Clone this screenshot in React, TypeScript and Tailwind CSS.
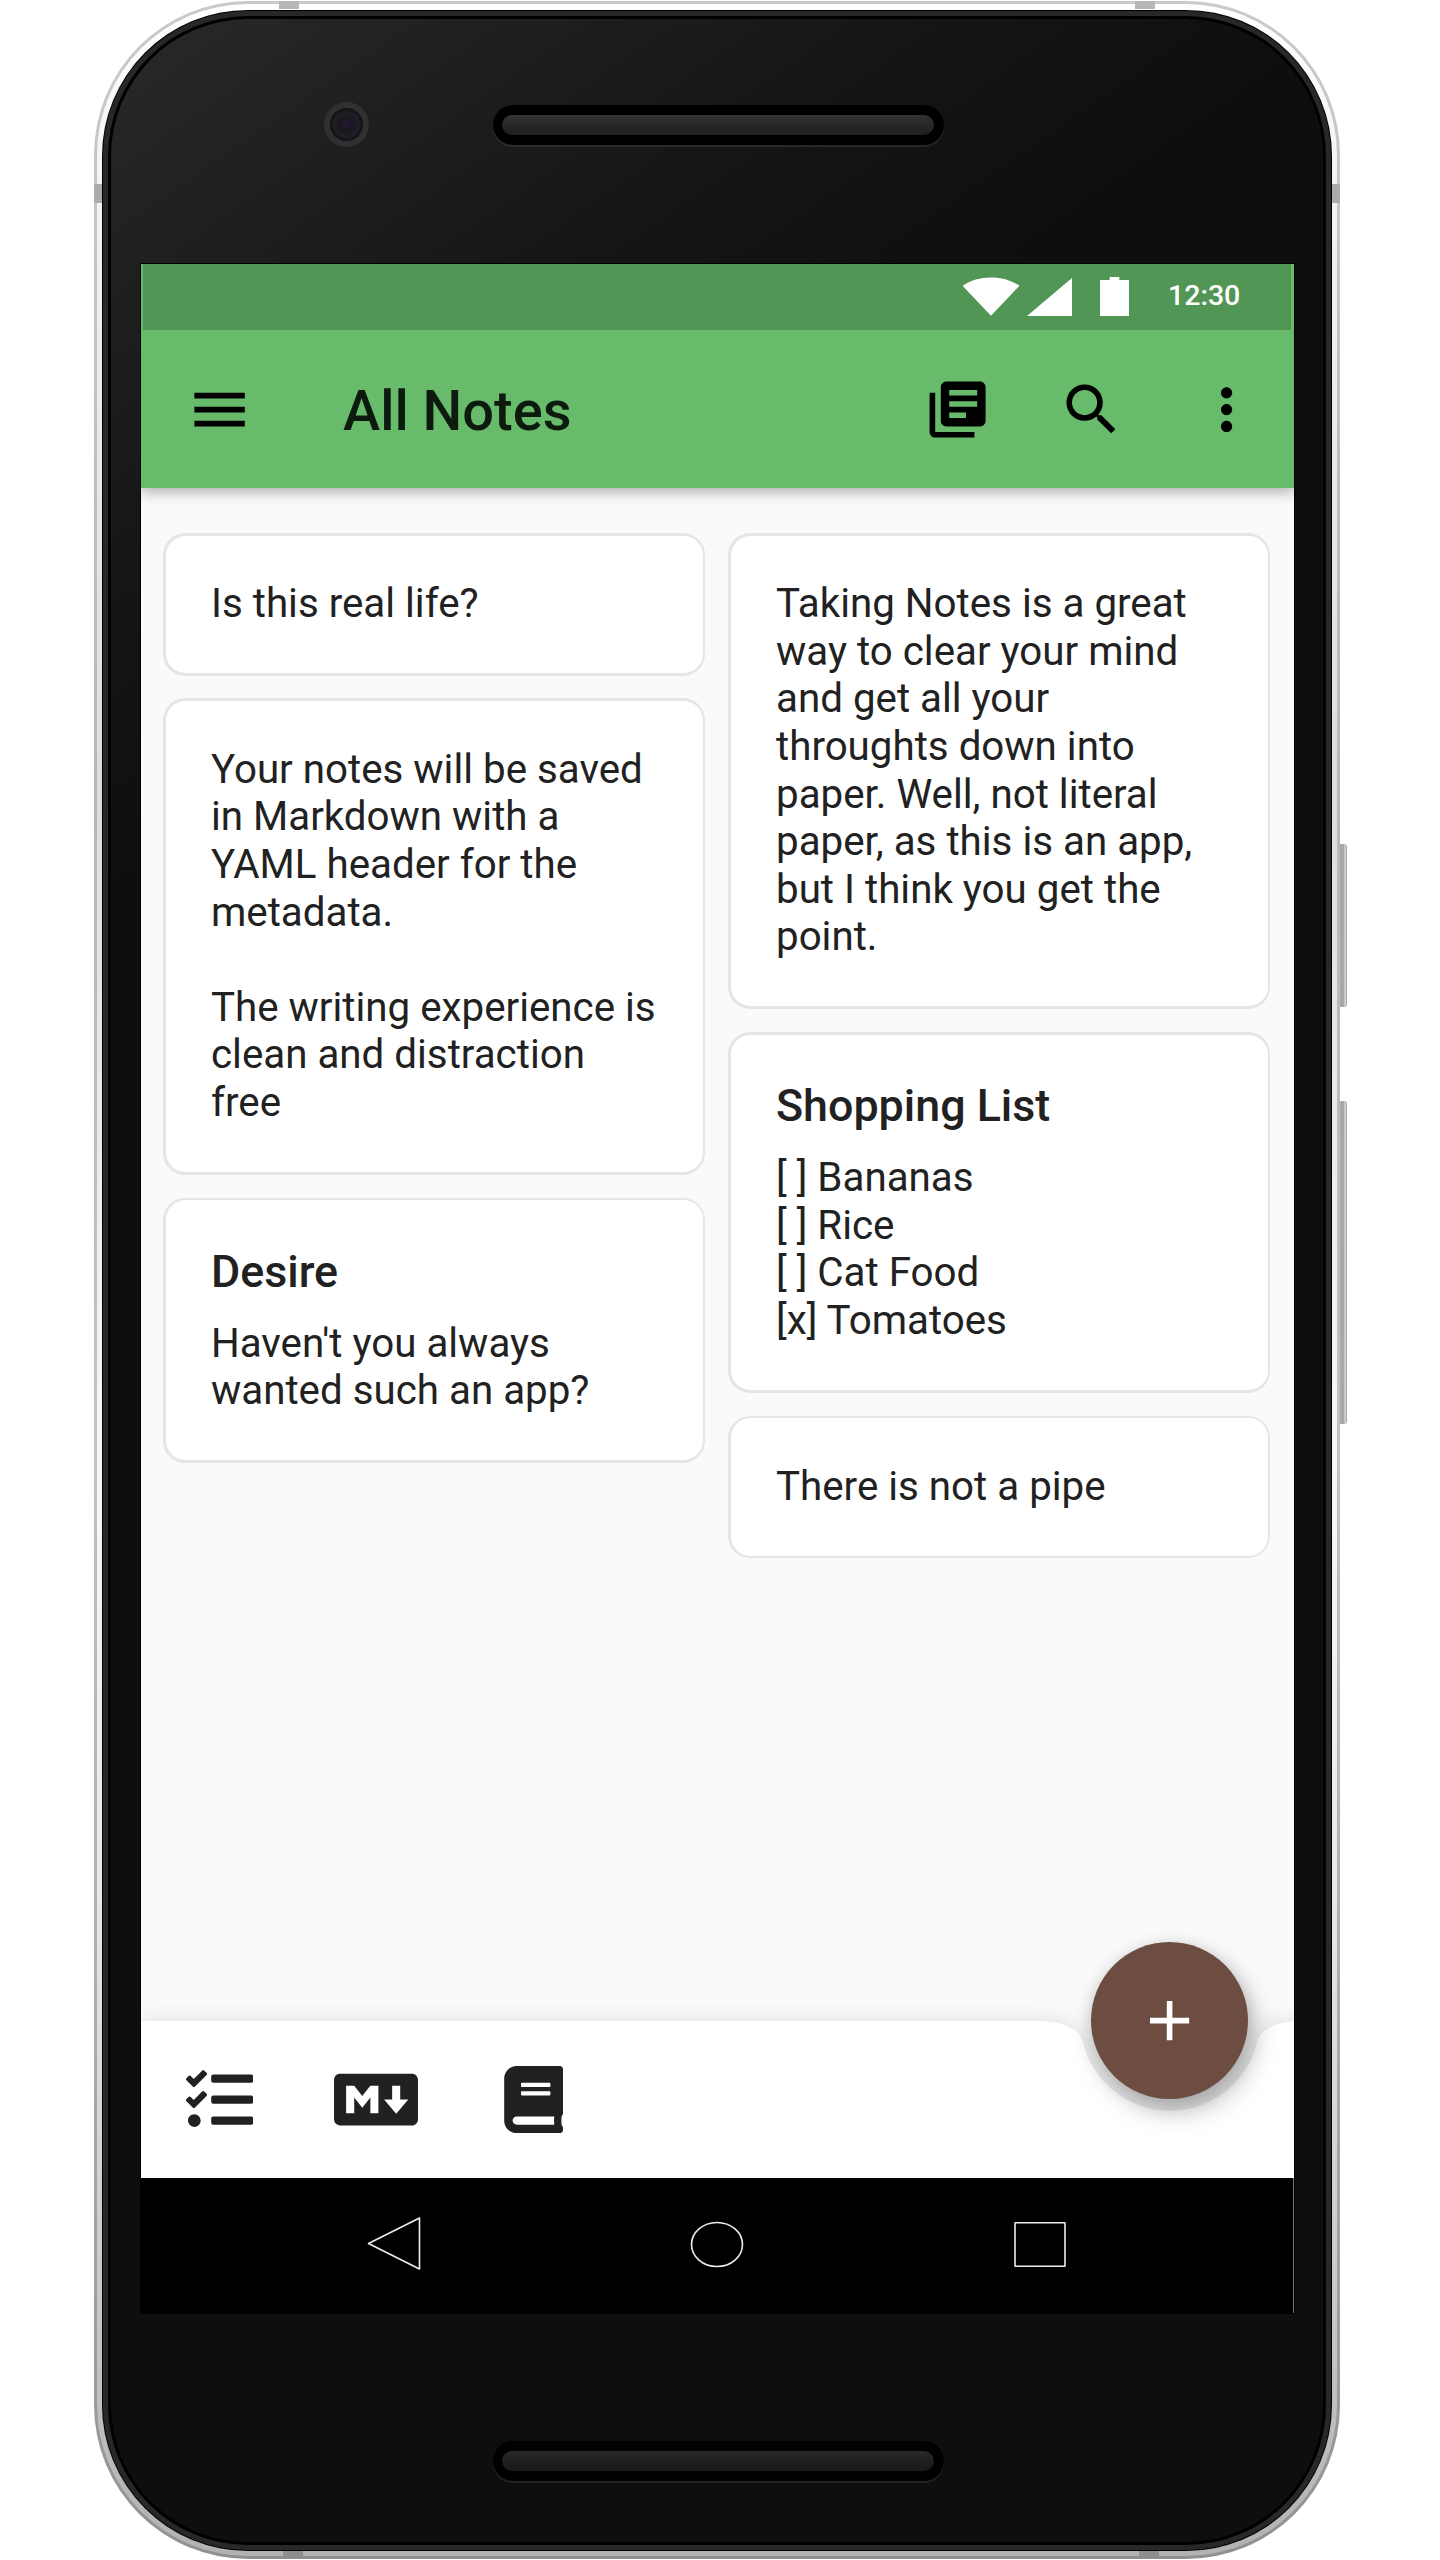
import type { ReactNode } from "react";
import { FaBook, FaMarkdown, FaTasks } from "react-icons/fa";
import { MdAdd, MdLibraryBooks, MdMenu, MdMoreVert, MdSearch } from "react-icons/md";

type Note = { title?: string; lines: string[] };

const leftNotes: Note[] = [
  { lines: ["Is this real life?"] },
  {
    lines: [
      "Your notes will be saved",
      "in Markdown with a",
      "YAML header for the",
      "metadata.",
      "",
      "The writing experience is",
      "clean and distraction",
      "free",
    ],
  },
  { title: "Desire", lines: ["Haven't you always", "wanted such an app?"] },
];

const rightNotes: Note[] = [
  {
    lines: [
      "Taking Notes is a great",
      "way to clear your mind",
      "and get all your",
      "throughts down into",
      "paper. Well, not literal",
      "paper, as this is an app,",
      "but I think you get the",
      "point.",
    ],
  },
  { title: "Shopping List", lines: ["[ ] Bananas", "[ ] Rice", "[ ] Cat Food", "[x] Tomatoes"] },
  { lines: ["There is not a pipe"] },
];

function NoteCard({ note }: { note: Note }) {
  return (
    <article className="rounded-[22px] bg-[#e5e5e5] p-[2.8px]">
      <div className="rounded-[19.5px] bg-white pt-[44.4px] pr-[44.8px] pb-[45.2px] pl-[44.8px] text-[#212121]">
        {note.title && (
          <h2 className="mb-[21.6px] pt-[1px] text-[44.8px] leading-[52.5px] font-medium">{note.title}</h2>
        )}
        {note.lines.map((line, i) => (
          <p key={i} className="h-[47.65px] text-[40.3px] leading-[47.65px] whitespace-pre">
            {line}
          </p>
        ))}
      </div>
    </article>
  );
}

function NoteColumn({ notes }: { notes: Note[] }) {
  return (
    <div className="flex w-[542px] flex-col gap-[22.8px]">
      {notes.map((note, i) => (
        <NoteCard key={i} note={note} />
      ))}
    </div>
  );
}

function StatusBar() {
  return (
    <div className="mr-[3px] ml-[2px] flex h-[65.5px] items-start justify-end bg-[#529655] pr-[52px] text-white">
      <svg className="mt-[13px] h-[39px] w-[58px]" viewBox="0 0 58 39" fill="currentColor">
        <path d="M0.5 8.8C16 -2.4 42 -2.4 57.5 8.8L29 38.7Z" />
      </svg>
      <svg className="mt-[13px] ml-[6.5px] h-[39px] w-[45px]" viewBox="0 0 45 39" fill="currentColor">
        <path d="M0 39L45 1V39Z" />
      </svg>
      <svg className="mt-[13px] ml-[28px] h-[39px] w-[29px]" viewBox="0 0 29 39" fill="currentColor">
        <path d="M0 3H9.7V0H19.3V3H29V39H0Z" />
      </svg>
      <span className="mt-[14px] ml-[39.5px] w-[71px] text-[28.5px] leading-[35px] font-medium whitespace-nowrap">
        12:30
      </span>
    </div>
  );
}

function ActionButton({ children }: { children: ReactNode }) {
  return (
    <button className="flex h-[134px] w-[134.4px] items-center justify-center text-[67.2px] text-black">
      {children}
    </button>
  );
}

function AppBar() {
  return (
    <header className="relative z-10 h-[224px] bg-[#67bb6b] shadow-[0_5px_12px_rgba(0,0,0,0.28)]">
      <StatusBar />
      <div className="flex h-[158.5px] items-center pt-[2px] pr-[0.6px]">
        <button className="flex w-[157px] items-center justify-center text-[67.2px] text-black">
          <MdMenu />
        </button>
        <h1 className="ml-[45px] flex-1 pt-[2px] text-[56px] leading-[66px] font-medium text-[#0d1a0e]">
          All Notes
        </h1>
        <ActionButton>
          <MdLibraryBooks />
        </ActionButton>
        <ActionButton>
          <MdSearch />
        </ActionButton>
        <ActionButton>
          <MdMoreVert />
        </ActionButton>
      </div>
    </header>
  );
}

function BottomBar() {
  return (
    <div className="relative h-[157px]">
      <svg
        className="absolute inset-0 h-[157px] w-[1153px] overflow-visible drop-shadow-[0_0_10px_rgba(0,0,0,0.12)]"
        viewBox="0 0 1153 157"
        fill="#fff"
      >
        <path d="M0 0H894.6Q936.6 0 942.1 21.9A89.6 89.6 0 0 0 1115.9 21.9Q1121.4 0 1163.4 0V157H0Z" />
      </svg>
      <div className="relative flex h-full items-center text-[67.2px] text-[#212121]">
        <span className="flex w-[156.8px] justify-center">
          <FaTasks />
        </span>
        <span className="flex w-[156.8px] justify-center">
          <FaMarkdown className="w-[84px]" />
        </span>
        <span className="flex w-[156.8px] justify-center pl-[1px]">
          <FaBook />
        </span>
      </div>
      <button className="absolute -top-[78.7px] right-[45.7px] flex h-[157px] w-[157px] items-center justify-center rounded-full bg-[#6d4c41] text-[67.2px] text-white shadow-[6px_12px_26px_rgba(0,0,0,0.26),0_4px_16px_rgba(0,0,0,0.14)]">
        <MdAdd />
      </button>
    </div>
  );
}

function NavBar() {
  return (
    <nav className="flex h-[135px] items-center justify-center border-r border-[#777] bg-black pb-[2px]">
      <svg className="h-[56px] w-[323px]" viewBox="0 0 323 56" fill="none" stroke="#eee" strokeWidth="1.6">
        <path d="M135.5 26.5L186.5 1V52Z" strokeLinejoin="round" />
      </svg>
      <svg className="h-[56px] w-[323px]" viewBox="0 0 323 56" fill="none" stroke="#eee" strokeWidth="1.6">
        <ellipse cx="161" cy="27.5" rx="25.5" ry="22" />
      </svg>
      <svg className="h-[56px] w-[323px]" viewBox="0 0 323 56" fill="none" stroke="#eee" strokeWidth="1.6">
        <rect x="136" y="5.7" width="50" height="43.6" rx="0.5" />
      </svg>
    </nav>
  );
}

function Speaker({ dim = false }: { dim?: boolean }) {
  return (
    <div className="h-10 w-[451px] rounded-full bg-black px-[9px] py-[10px] shadow-[0_2px_1px_rgba(255,255,255,0.09)]">
      {dim ? (
        <div className="h-5 w-[432px] rounded-full bg-linear-to-b from-[#2a2a2a] via-[#1f1f1f] to-[#191919]" />
      ) : (
        <div className="h-5 w-[432px] rounded-full bg-linear-to-b from-[#343434] via-[#272727] to-[#202020]" />
      )}
    </div>
  );
}

function Camera() {
  return (
    <div className="h-[45px] w-[45px] rounded-full bg-[#303030] p-[6px]">
      <div className="h-[33px] w-[33px] rounded-full bg-[radial-gradient(circle_closest-side,#221a33_0%,#19161e_40%,#211d25_75%,#100e12_100%)]" />
    </div>
  );
}

function Screen() {
  return (
    <div className="w-[1153px] overflow-hidden outline outline-black">
      <div className="flex h-[1914px] flex-col overflow-hidden bg-[#fafafa]">
        <AppBar />
        <main className="flex flex-1 items-start justify-between pt-[44.8px] pr-[23.6px] pl-[22.4px]">
          <NoteColumn notes={leftNotes} />
          <NoteColumn notes={rightNotes} />
        </main>
        <BottomBar />
      </div>
      <NavBar />
    </div>
  );
}

export default function App() {
  return (
    <div className="h-[2560px] w-[1440px] overflow-hidden bg-white pt-[1px] pl-[94px] font-[Roboto,sans-serif]">
      <div className="relative h-[2558px] w-[1246px] rounded-[154px] bg-[linear-gradient(#cacaca,#b8b8b8_31%,#c2c2c2_57%,#b0b0b0_75%,#999_95%,#909090)] p-[3px]">
        <div className="h-full rounded-[151px] bg-[linear-gradient(#fff,#f2f2f2_8%,#dddddd_31%,#f8f8f8_57%,#e8e8e8_74%,#c6c6c6_91%,#b2b2b2)] px-[5px] pt-[6px] pb-[5px]">
          <div className="h-full rounded-[146px] bg-black p-[1px]">
            <div className="h-full rounded-[145px] bg-[#282828] p-[5px]">
              <div className="h-full rounded-[140px] bg-black p-[3px]">
                <div className="flex h-full flex-col rounded-[137px] bg-[linear-gradient(145deg,#292929,#151515_470px,#0e0e0e_720px)] pl-[30px]">
                  <div className="flex h-[245px] items-start pt-[83px] pl-[182.5px]">
                    <Camera />
                    <div className="mt-[3px] ml-[124.5px]">
                      <Speaker />
                    </div>
                  </div>
                  <Screen />
                  <div className="mt-[128px] pl-[352px]">
                    <Speaker dim />
                  </div>
                </div>
              </div>
            </div>
          </div>
        </div>

        {/* antenna bands */}
        <div className="absolute top-0 left-[185px] h-[8px] w-5 bg-[#b6b6b6]" />
        <div className="absolute top-0 left-[1041px] h-[8px] w-5 bg-[#b6b6b6]" />
        <div className="absolute top-[183px] left-0 h-[19px] w-2 bg-[#ababab]" />
        <div className="absolute top-[183px] right-0 h-[19px] w-2 bg-[#ababab]" />
        <div className="absolute bottom-0 left-[189px] h-2 w-5 bg-[#8e8e8e]" />
        <div className="absolute bottom-0 left-[1045px] h-2 w-5 bg-[#8e8e8e]" />

        {/* power and volume keys */}
        <div className="absolute top-[843px] -right-[7px] h-[163px] w-[7px] rounded-r-[3px] border-r border-[#a8a8a8] bg-linear-to-r from-[#a8a8a8] from-65% to-[#d4d4d4] to-80%" />
        <div className="absolute top-[1100px] -right-[7px] h-[323px] w-[7px] rounded-r-[3px] border-r border-[#a8a8a8] bg-linear-to-r from-[#a8a8a8] from-65% to-[#d4d4d4] to-80%" />
      </div>
    </div>
  );
}
